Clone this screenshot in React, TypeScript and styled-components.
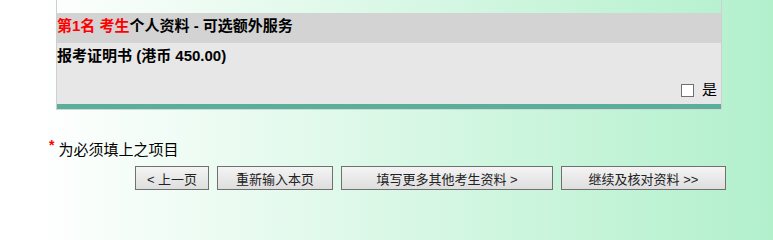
import React from "react";
import styled, { createGlobalStyle } from "styled-components";

const GlobalStyle = createGlobalStyle`
  html, body {
    margin: 0;
    padding: 0;
  }
  body {
    width: 773px;
    height: 214px;
    overflow: hidden;
    background: linear-gradient(90deg, #ffffff 0%, #ffffff 4%, #b2f0cc 100%);
    font-family: "Liberation Sans", "Noto Sans CJK SC", sans-serif;
    color: #000;
  }
`;

const Page = styled.div`
  display: flex;
  flex-direction: column;
`;

const Panel = styled.div`
  margin-left: 56px;
  width: 664px;
  border-left: 1px solid #cfcfcf;
  border-right: 1px solid #cfcfcf;
  border-bottom: 1px solid #d6d6d6;
  display: flex;
  flex-direction: column;
`;

const TopGap = styled.div`
  height: 13px;
`;

const Header = styled.div`
  height: 30px;
  box-sizing: border-box;
  padding-top: 3px;
  background: #d3d3d3;
  font-size: 15px;
  font-weight: bold;
  line-height: 20px;
  white-space: nowrap;
`;

const Highlight = styled.span`
  color: #ff0000;
`;

const Body = styled.div`
  background: #e7e7e7;
  padding: 3px 4px 4px 0;
  display: flex;
  flex-direction: column;
`;

const ItemTitle = styled.div`
  font-size: 15px;
  font-weight: bold;
  line-height: 20px;
  white-space: nowrap;
`;

const OptionRow = styled.label`
  margin-top: 14px;
  height: 20px;
  display: flex;
  align-items: center;
  justify-content: flex-end;
  font-size: 15px;
  line-height: 20px;
`;

const Check = styled.input`
  appearance: none;
  -webkit-appearance: none;
  box-sizing: border-box;
  width: 13px;
  height: 13px;
  margin: 0 8px 0 0;
  border: 1px solid #707070;
  border-radius: 0;
  background: #ffffff;
  &:checked {
    background: #ffffff radial-gradient(circle, #333 0 3px, transparent 3.5px);
  }
`;

const TealBar = styled.div`
  height: 5px;
  background: #5aaf9b;
`;

const Note = styled.div`
  margin-top: 30px;
  padding-left: 49px;
  font-size: 15px;
  line-height: 20px;
  white-space: nowrap;
`;

const Req = styled.span`
  color: #ff0000;
  font-size: 14px;
  font-weight: bold;
  vertical-align: 5px;
  line-height: 0;
`;

const Buttons = styled.div`
  margin-top: 6px;
  padding-left: 135px;
  display: flex;
  gap: 8px;
`;

const Btn = styled.button<{ $w: number }>`
  width: ${(p) => p.$w}px;
  height: 24px;
  box-sizing: border-box;
  padding: 0;
  border: 1px solid #707070;
  border-radius: 0;
  background: linear-gradient(#f4f4f4, #dedede);
  font-family: "Liberation Sans", "Noto Sans CJK SC", sans-serif;
  font-size: 13px;
  color: #222;
  white-space: nowrap;
`;

export default function App() {
  return (
    <Page>
      <GlobalStyle />
      <Panel>
        <TopGap />
        <Header>
          <Highlight>第1名 考生</Highlight>个人资料 - 可选额外服务
        </Header>
        <Body>
          <ItemTitle>报考证明书 (港币 450.00)</ItemTitle>
          <OptionRow>
            <Check type="checkbox" />
            是
          </OptionRow>
        </Body>
        <TealBar />
      </Panel>
      <Note>
        <Req>*</Req> 为必须填上之项目
      </Note>
      <Buttons>
        <Btn $w={74}>&lt; 上一页</Btn>
        <Btn $w={116}>重新输入本页</Btn>
        <Btn $w={212}>填写更多其他考生资料 &gt;</Btn>
        <Btn $w={165}>继续及核对资料 &gt;&gt;</Btn>
      </Buttons>
    </Page>
  );
}
